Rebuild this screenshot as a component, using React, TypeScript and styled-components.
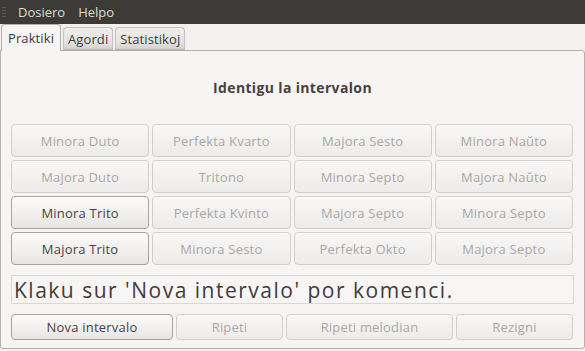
import React from "react";
import styled, { createGlobalStyle } from "styled-components";

const GlobalStyle = createGlobalStyle`
  html, body {
    margin: 0;
    padding: 0;
    background: #f2f1f0;
    font-family: "Open Sans", "Noto Sans", sans-serif;
  }
`;

const intervals: { label: string; enabled: boolean }[] = [
  { label: "Minora Duto", enabled: false },
  { label: "Perfekta Kvarto", enabled: false },
  { label: "Majora Sesto", enabled: false },
  { label: "Minora Naŭto", enabled: false },
  { label: "Majora Duto", enabled: false },
  { label: "Tritono", enabled: false },
  { label: "Minora Septo", enabled: false },
  { label: "Majora Naŭto", enabled: false },
  { label: "Minora Trito", enabled: true },
  { label: "Perfekta Kvinto", enabled: false },
  { label: "Majora Septo", enabled: false },
  { label: "Minora Septo", enabled: false },
  { label: "Majora Trito", enabled: true },
  { label: "Minora Sesto", enabled: false },
  { label: "Perfekta Okto", enabled: false },
  { label: "Majora Septo", enabled: false },
];

const actions = [
  { label: "Nova intervalo", enabled: true },
  { label: "Ripeti", enabled: false },
  { label: "Ripeti melodian", enabled: false },
  { label: "Rezigni", enabled: false },
];

const App = () => {
  return (
    <>
      <GlobalStyle />
      <Window>
        <MenuBar>
          <Grip />
          <MenuItem>Dosiero</MenuItem>
          <MenuItem>Helpo</MenuItem>
        </MenuBar>
        <TabStrip>
          <Tab $active>Praktiki</Tab>
          <Tab>Agordi</Tab>
          <Tab>Statistikoj</Tab>
        </TabStrip>
        <Panel>
          <Heading>Identigu la intervalon</Heading>
          <IntervalGrid>
            {intervals.map((item, i) => (
              <GtkButton key={i} $enabled={item.enabled}>
                {item.label}
              </GtkButton>
            ))}
          </IntervalGrid>
          <Status>Klaku sur 'Nova intervalo' por komenci.</Status>
          <ActionRow>
            {actions.map((a) => (
              <GtkButton key={a.label} $enabled={a.enabled}>
                {a.label}
              </GtkButton>
            ))}
          </ActionRow>
        </Panel>
      </Window>
    </>
  );
};

export default App;

const Window = styled.div`
  width: 585px;
  height: 351px;
  display: flex;
  flex-direction: column;
  background: #f2f1f0;
  overflow: hidden;
`;

const MenuBar = styled.div`
  height: 24px;
  flex: none;
  display: flex;
  align-items: center;
  background: #3c3b37;
  padding-left: 2px;
`;

const Grip = styled.div`
  width: 4px;
  height: 10px;
  margin-right: 6px;
  background: repeating-linear-gradient(
    to bottom,
    #5a5953 0px,
    #5a5953 1px,
    transparent 1px,
    transparent 3px
  );
`;

const MenuItem = styled.div`
  color: #dfdbd2;
  font-size: 13px;
  padding: 0 7px 0 6px;
  line-height: 24px;
`;

const TabStrip = styled.div`
  height: 26px;
  flex: none;
  display: flex;
  align-items: flex-end;
  gap: 2px;
  padding-left: 1px;
  position: relative;
  z-index: 1;
`;

const Tab = styled.div<{ $active?: boolean }>`
  height: ${(p) => (p.$active ? "27px" : "23px")};
  box-sizing: border-box;
  display: flex;
  align-items: center;
  padding: ${(p) => (p.$active ? "0 6px 1px" : "0 4px")};
  font-size: 13px;
  letter-spacing: 0.1px;
  color: #3c3b37;
  border: 1px solid ${(p) => (p.$active ? "#b4b0ac" : "#c4c0bc")};
  border-bottom: ${(p) => (p.$active ? "none" : "1px solid #b4b0ac")};
  border-radius: 4px 4px 0 0;
  background: ${(p) =>
    p.$active
      ? "#f6f5f4"
      : "linear-gradient(to bottom, #efedec 0%, #e6e4e2 65%, #d4d1ce 100%)"};
  margin-bottom: ${(p) => (p.$active ? "-1px" : "0")};
`;

const Panel = styled.div`
  flex: 1;
  margin-bottom: 2px;
  border: 1px solid #b4b0ac;
  border-radius: 0 3px 3px 3px;
  background: #f6f5f4;
  padding: 0 10px;
  display: flex;
  flex-direction: column;
`;

const Heading = styled.div`
  padding: 27px 0 26px;
  line-height: 20px;
  text-align: center;
  font-size: 14px;
  letter-spacing: 0.35px;
  font-weight: bold;
  color: #4a3f3f;
`;

const IntervalGrid = styled.div`
  display: grid;
  grid-template-columns: repeat(4, 1fr);
  grid-auto-rows: 33px;
  column-gap: 3px;
  row-gap: 3px;
  margin-right: 1px;
`;

const GtkButton = styled.div<{ $enabled?: boolean }>`
  box-sizing: border-box;
  display: flex;
  align-items: center;
  justify-content: center;
  font-size: 13px;
  letter-spacing: 0.2px;
  white-space: nowrap;
  border-radius: 4px;
  border: 1px solid ${(p) => (p.$enabled ? "#a7a39f" : "#d2cecb")};
  color: ${(p) => (p.$enabled ? "#4a3f3f" : "#aba7a4")};
  background: ${(p) =>
    p.$enabled
      ? "linear-gradient(to bottom, #fbfbfa 0%, #f1f0ef 55%, #e7e5e3 100%)"
      : "linear-gradient(to bottom, #f8f7f6 0%, #f2f1f0 55%, #ecebe9 100%)"};
  box-shadow: inset 0 1px 0 rgba(255, 255, 255, 0.8);
`;

const Status = styled.div`
  margin-top: 10px;
  height: 29px;
  box-sizing: border-box;
  border: 1px solid #dad6d2;
  background: #f7f6f5;
  display: flex;
  align-items: center;
  padding-left: 2px;
  font-size: 21px;
  color: #453a3a;
  letter-spacing: 1.5px;
  white-space: nowrap;
  overflow: hidden;
`;

const ActionRow = styled.div`
  margin-top: 10px;
  height: 26px;
  display: grid;
  grid-template-columns: 162fr 107fr 167fr 117fr;
  column-gap: 3px;
  margin-right: 1px;
`;
